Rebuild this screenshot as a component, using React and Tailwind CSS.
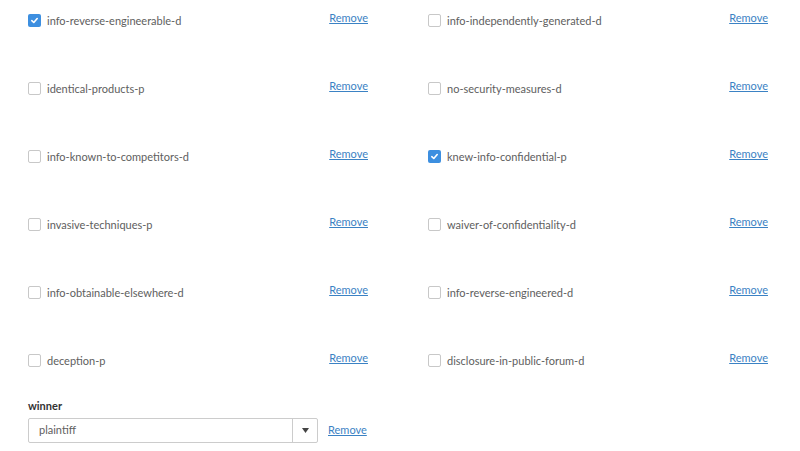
import React from 'react';

const left = [
  { name: 'info-reverse-engineerable-d', checked: true },
  { name: 'identical-products-p' },
  { name: 'info-known-to-competitors-d' },
  { name: 'invasive-techniques-p' },
  { name: 'info-obtainable-elsewhere-d' },
  { name: 'deception-p' },
];

const right = [
  { name: 'info-independently-generated-d' },
  { name: 'no-security-measures-d' },
  { name: 'knew-info-confidential-p', checked: true },
  { name: 'waiver-of-confidentiality-d' },
  { name: 'info-reverse-engineered-d' },
  { name: 'disclosure-in-public-forum-d' },
];

const Box = ({ checked }) =>
  checked ? (
    <span className="w-[13px] h-[13px] rounded-[2px] bg-[#3d8fe0] flex items-center justify-center shrink-0">
      <svg width="9" height="9" viewBox="0 0 10 10">
        <path d="M2 5.2 L4.2 7.2 L8 2.8" stroke="#fff" strokeWidth="1.8" fill="none" strokeLinecap="round" strokeLinejoin="round" />
      </svg>
    </span>
  ) : (
    <span className="w-[13px] h-[13px] rounded-[2px] border border-[#c8c8c8] bg-white shrink-0" />
  );

const Row = ({ item }) => (
  <div className="h-[68px] flex items-start justify-between pt-[14px]">
    <label className="flex items-center gap-[6px] text-[11px] text-[#5e5e5e] leading-[13px]">
      <Box checked={item.checked} />
      <span>{item.name}</span>
    </label>
    <a href="#" className="text-[11px] text-[#3b82c4] underline leading-[13px] -mt-[3px] -ml-[1px]">
      Remove
    </a>
  </div>
);

export default function App() {
  return (
    <div className="w-[800px] h-[451px] bg-white overflow-hidden" style={{ fontFamily: 'Lato, "Open Sans", sans-serif' }}>
      <div className="grid grid-cols-2">
        <div className="pl-[28px] pr-[32px]">
          {left.map((it) => (
            <Row key={it.name} item={it} />
          ))}
        </div>
        <div className="pl-[28px] pr-[32px]">
          {right.map((it) => (
            <Row key={it.name} item={it} />
          ))}
        </div>
      </div>
      <div className="pl-[28px] -mt-[9px]">
        <div className="text-[11px] font-bold text-[#333] leading-[13px]">winner</div>
        <div className="flex items-center mt-[6px]">
          <div className="w-[290px] h-[25px] border border-[#ccc] rounded-[2px] flex">
            <div className="flex-1 flex items-center pl-[10px] text-[11px] text-[#5e5e5e]">plaintiff</div>
            <div className="w-[25px] border-l border-[#ccc] flex items-center justify-center">
              <svg width="7" height="5" viewBox="0 0 7 5">
                <path d="M0 0 L7 0 L3.5 5 Z" fill="#444" />
              </svg>
            </div>
          </div>
          <a href="#" className="ml-[10px] text-[11px] text-[#3b82c4] underline -mt-[1px]">
            Remove
          </a>
        </div>
      </div>
    </div>
  );
}
